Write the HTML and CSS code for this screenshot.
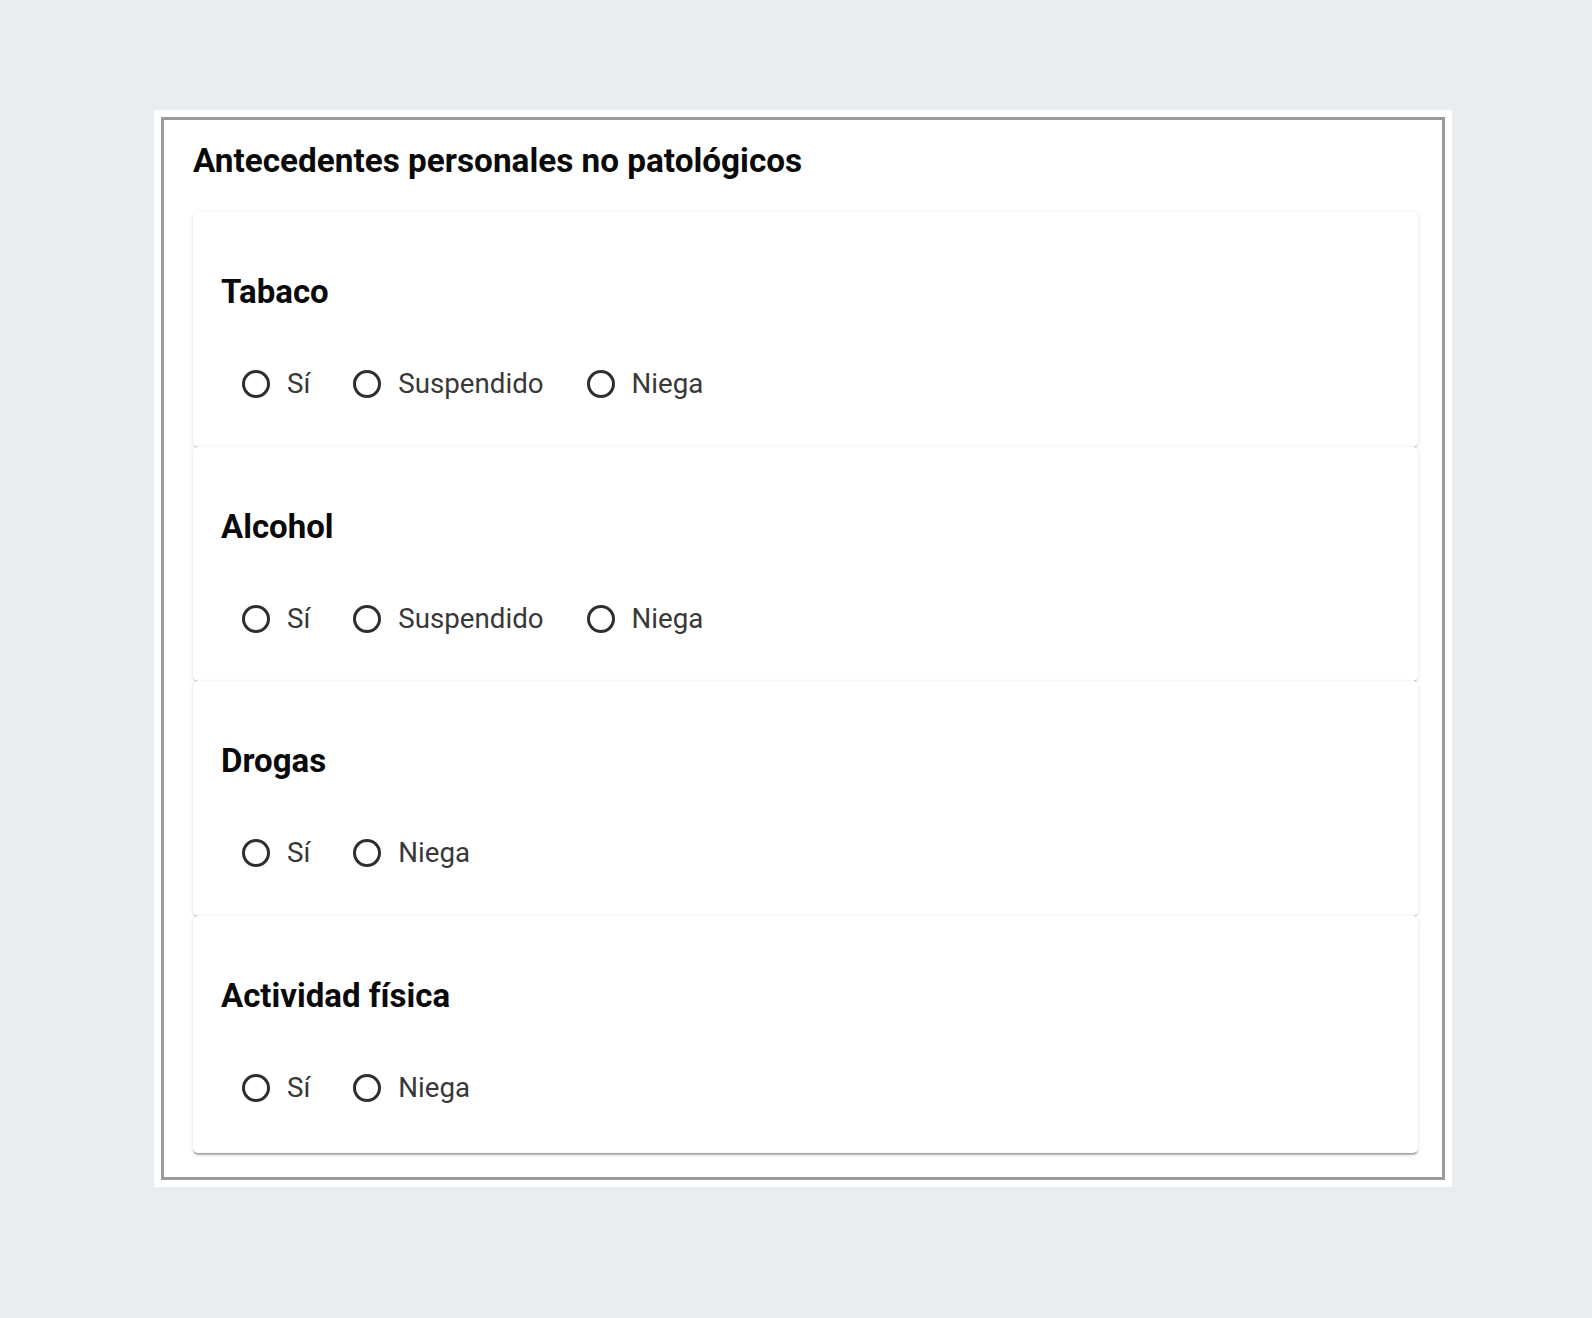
FILE: index.html
```html
<!DOCTYPE html>
<html lang="es">
<head>
<meta charset="utf-8">
<title>Antecedentes personales no patológicos</title>
<link rel="stylesheet" href="styles.css">
</head>
<body>
<div class="frame">
  <div class="panel">
    <h1 class="title">Antecedentes personales no patológicos</h1>
    <div class="card">
      <section class="item">
        <h2 class="item-title">Tabaco</h2>
        <div class="options">
          <label class="option"><span class="radio"></span><span class="opt-text">Sí</span></label>
          <label class="option"><span class="radio"></span><span class="opt-text">Suspendido</span></label>
          <label class="option"><span class="radio"></span><span class="opt-text">Niega</span></label>
        </div>
      </section>
      <section class="item">
        <h2 class="item-title">Alcohol</h2>
        <div class="options">
          <label class="option"><span class="radio"></span><span class="opt-text">Sí</span></label>
          <label class="option"><span class="radio"></span><span class="opt-text">Suspendido</span></label>
          <label class="option"><span class="radio"></span><span class="opt-text">Niega</span></label>
        </div>
      </section>
      <section class="item">
        <h2 class="item-title">Drogas</h2>
        <div class="options">
          <label class="option"><span class="radio"></span><span class="opt-text">Sí</span></label>
          <label class="option"><span class="radio"></span><span class="opt-text">Niega</span></label>
        </div>
      </section>
      <section class="item">
        <h2 class="item-title">Actividad física</h2>
        <div class="options">
          <label class="option"><span class="radio"></span><span class="opt-text">Sí</span></label>
          <label class="option"><span class="radio"></span><span class="opt-text">Niega</span></label>
        </div>
      </section>
    </div>
  </div>
</div>
</body>
</html>
```

FILE: styles.css
```css
html, body {
  margin: 0;
  padding: 0;
}
body {
  background: #e9edf0;
  font-family: Roboto, "Liberation Sans", Arial, sans-serif;
  min-height: 1318px;
}
.frame {
  margin: 110px 0 0 154px;
  width: 1298px;
  box-sizing: border-box;
  background: #ffffff;
  padding: 7px;
}
.panel {
  border: 3px solid #9a9a9a;
  padding: 21px 24px 24px 29px;
}
.title {
  margin: 0 0 31px 0;
  font-size: 33.3px;
  line-height: 40px;
  font-weight: 700;
  color: #0a0a0a;
}
.card {
  display: flex;
  flex-direction: column;
}
.item {
  height: 234.5px;
  box-sizing: border-box;
  padding: 60px 28px 0 28px;
  background: #fff;
  border-radius: 5px;
  box-shadow: 0 3px 1px -2px rgba(0,0,0,0.22), 0 1px 1px 0 rgba(0,0,0,0.14), 0 1px 4px 0 rgba(0,0,0,0.10);
}
.item:last-child {
  height: 237.5px;
  box-shadow: 0 3px 2px -1px rgba(0,0,0,0.26), 0 1px 1px 0 rgba(0,0,0,0.14), 0 1px 4px 0 rgba(0,0,0,0.10);
}
.item-title {
  margin: 0 0 50px 0;
  font-size: 33px;
  line-height: 40px;
  font-weight: 700;
  color: #0a0a0a;
}
.options {
  display: flex;
  align-items: center;
  height: 44px;
  padding-left: 21px;
}
.option {
  display: flex;
  align-items: center;
  margin-right: 43px;
}
.radio {
  width: 28px;
  height: 28px;
  box-sizing: border-box;
  border: 3px solid #2e2e2e;
  border-radius: 50%;
  margin-right: 17px;
}
.opt-text {
  font-size: 27.7px;
  line-height: 44px;
  color: #383838;
}
```
